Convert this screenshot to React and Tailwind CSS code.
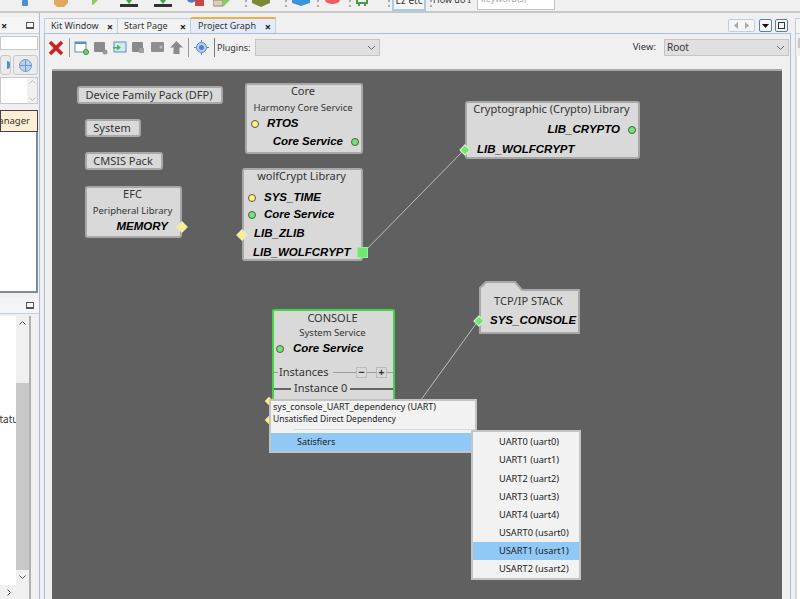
import React from "react";

const Close = () => <span className="text-[11px] font-bold leading-none text-[#222]">×</span>;

function Port({ kind, color }) {
    const fill = color === "green" ? "bg-[#6fe86f]" : "bg-[#fdf27a]";
    if (kind === "diamond") {
        return <span className={`block w-[8px] h-[8px] rotate-45 ${fill} border border-[#e8e8e8]`} />;
    }
    return <span className={`block w-[8px] h-[8px] rounded-full ${fill} border border-[#555]`} />;
}

function Label({ children, className = "" }) {
    return <span className={`font-['Liberation_Sans',sans-serif] font-bold italic text-[11.5px] leading-none text-black whitespace-nowrap ${className}`}>{children}</span>;
}

function Pill({ className, children }) {
    return (
        <div className={`absolute h-[18px] pr-[2px] flex items-center justify-center bg-[#d9d9d9] border-2 border-[#a8a8a8] rounded-[3px] text-[11px] text-[#333] whitespace-nowrap ${className}`}>
            {children}
        </div>
    );
}

function Box({ className, title, subtitle, children }) {
    return (
        <div className={`absolute bg-[#d9d9d9] border-2 border-[#a8a8a8] rounded-[3px] flex flex-col ${className}`}>
            <div className="pr-[2px] text-center text-[11px] leading-[12px] text-[#333] whitespace-nowrap">{title}</div>
            {subtitle && <div className="pr-[2px] text-center text-[9.5px] leading-[12px] mt-[5px] text-[#333] whitespace-nowrap">{subtitle}</div>}
            {children}
        </div>
    );
}

function GraphCanvas() {
    return (
        <div className="relative flex-1 bg-[#606060] border-t-2 border-[#a9a9a9] overflow-hidden">
            <svg className="absolute left-0 top-0" width="730" height="529" fill="none" stroke="#bdbdbd" strokeWidth="1">
                <path d="M311 182 L413 78" />
                <path d="M426 250 L366 333" />
            </svg>

            <Pill className="left-[25px] top-[15px] w-[146px]">Device Family Pack (DFP)</Pill>
            <Pill className="left-[33px] top-[48px] w-[56px]">System</Pill>
            <Pill className="left-[33px] top-[81px] w-[78px]">CMSIS Pack</Pill>

            <Box className="left-[33px] top-[115px] w-[97px] h-[52px]" title="EFC" subtitle="Peripheral Library">
                <div className="relative flex justify-end pr-[12px] mt-[4px]">
                    <Label>MEMORY</Label>
                    <span className="absolute right-[-6px] top-[2px]"><Port kind="diamond" /></span>
                </div>
            </Box>

            <Box className="left-[193px] top-[12px] w-[118px] h-[71px]" title="Core" subtitle="Harmony Core Service">
                <div className="flex items-center gap-[8px] pl-[4px] mt-[3px] h-[14px]">
                    <Port />
                    <Label>RTOS</Label>
                </div>
                <div className="flex items-center justify-end gap-[8px] pr-[2px] mt-[4px] h-[14px]">
                    <Label>Core Service</Label>
                    <Port color="green" />
                </div>
            </Box>

            <Box className="left-[190px] top-[97px] w-[121px] h-[93px]" title="wolfCrypt Library">
                <div className="flex items-center gap-[8px] pl-[4px] mt-[9px] h-[14px]">
                    <Port />
                    <Label>SYS_TIME</Label>
                </div>
                <div className="flex items-center gap-[8px] pl-[4px] mt-[4px] h-[14px]">
                    <Port color="green" />
                    <Label>Core Service</Label>
                </div>
                <div className="relative pl-[10px] mt-[6px] h-[14px] flex items-center">
                    <span className="absolute left-[-6px] top-[3px]"><Port kind="diamond" color="yellow" /></span>
                    <Label>LIB_ZLIB</Label>
                </div>
                <div className="relative pl-[9px] mt-[5px] h-[14px] flex items-center">
                    <Label>LIB_WOLFCRYPT</Label>
                    <span className="absolute right-[-7px] top-[1px] w-[11px] h-[11px] bg-[#6fe86f] border border-[#9ce89c]" />
                </div>
            </Box>

            <Box className="left-[413px] top-[30px] w-[175px] h-[58px]" title="Cryptographic (Crypto) Library">
                <div className="flex items-center justify-end gap-[8px] pr-[2px] mt-[8px] h-[14px]">
                    <Label>LIB_CRYPTO</Label>
                    <Port color="green" />
                </div>
                <div className="relative pl-[10px] mt-[6px] h-[14px] flex items-center">
                    <span className="absolute left-[-6px] top-[3px]"><Port kind="diamond" color="green" /></span>
                    <Label>LIB_WOLFCRYPT</Label>
                </div>
            </Box>

            {/* folder tab on top of the stack node */}
            <svg className="absolute left-[427px] top-[210px]" width="101" height="11" fill="#d9d9d9" stroke="#a8a8a8" strokeWidth="2">
                <path d="M1 11 V7 L7 1 H36 L43 9 H100 V11" />
            </svg>
            <div className="absolute left-[427px] top-[220px] w-[101px] h-[43px] bg-[#d9d9d9] border-2 border-t-0 border-[#a8a8a8] flex flex-col">
                <div className="pr-[2px] text-center text-[11px] leading-[14px] text-[#333] whitespace-nowrap mt-[3px]">TCP/IP STACK</div>
                <div className="relative pl-[9px] mt-[6px] h-[14px] flex items-center">
                    <span className="absolute left-[-6px] top-[3px]"><Port kind="diamond" color="green" /></span>
                    <Label>SYS_CONSOLE</Label>
                </div>
            </div>

            <div className="absolute left-[220px] top-[238px] w-[123px] h-[110px] bg-[#d9d9d9] border-2 border-[#3fd53f] rounded-[2px] flex flex-col">
                <div className="pr-[2px] text-center text-[11px] leading-[13px] text-[#333]">CONSOLE</div>
                <div className="pr-[2px] text-center text-[9.5px] leading-[12px] mt-[3px] text-[#333]">System Service</div>
                <div className="flex items-center gap-[9px] pl-[2px] mt-[4px] h-[14px]">
                    <Port color="green" />
                    <Label>Core Service</Label>
                </div>
                <div className="flex items-center mt-[11px] h-[14px]">
                    <span className="w-[4px] h-px bg-[#999]" />
                    <span className="text-[11px] text-[#333] ml-[1px]">Instances</span>
                    <span className="flex-1 h-px bg-[#999] ml-[4px]" />
                    <span className="w-[11px] h-[11px] border border-[#bbb] text-[11px] leading-[8px] font-bold text-center text-[#333]">−</span>
                    <span className="w-[9px] h-px bg-[#999]" />
                    <span className="w-[11px] h-[11px] border border-[#bbb] text-[11px] leading-[8px] font-bold text-center text-[#333]">+</span>
                    <span className="w-[6px] h-px bg-[#999]" />
                </div>
                <div className="flex items-center mt-[2px] h-[14px]">
                    <span className="w-[17px] h-[2px] bg-[#666]" />
                    <span className="text-[11px] text-[#333] mx-[3px] whitespace-nowrap">Instance 0</span>
                    <span className="flex-1 h-[2px] bg-[#666]" />
                </div>
                <div className="pl-[12px] -mt-[2px]"><Label>UART</Label></div>
            </div>
            <span className="absolute left-[214px] top-[327px] w-[6px] h-[6px] rotate-45 bg-[#fdf27a]" />
            <span className="absolute left-[214px] top-[346px] w-[6px] h-[6px] rotate-45 bg-[#fdf27a]" />

            {/* context menu */}
            <div className="absolute left-[217px] top-[328px] w-[208px] h-[54px] bg-[#f2f2f2] border-2 border-[#c4c4c4] text-[9px] text-[#222]">
                <div className="pl-[2px] leading-[12px] whitespace-nowrap">sys_console_UART_dependency (UART)</div>
                <div className="pl-[2px] leading-[12px] text-[8.5px] whitespace-nowrap">Unsatisfied Direct Dependency</div>
                <div className="ml-[22px] mt-[4px] h-[1px] bg-[#dcdcdc]" />
                <div className="mt-[3px] h-[18px] bg-[#90c8f6] flex items-center justify-between pl-[26px] pr-[1px]">
                    <span>Satisfiers</span>
                    <span className="text-[#444]">›</span>
                </div>
            </div>

            <div className="absolute left-[419px] top-[359px] w-[110px] h-[150px] bg-[#f2f2f2] border-2 border-[#c4c4c4] pt-[1px] text-[9.25px] text-[#222]">
                {["UART0 (uart0)", "UART1 (uart1)", "UART2 (uart2)", "UART3 (uart3)", "UART4 (uart4)", "USART0 (usart0)", "USART1 (usart1)", "USART2 (usart2)"].map((item) => (
                    <div key={item} className={`h-[18.2px] flex items-center pl-[26px] whitespace-nowrap ${item.startsWith("USART1") ? "bg-[#90c8f6]" : ""}`}>
                        {item}
                    </div>
                ))}
            </div>
        </div>
    );
}

function GraphToolbar() {
    return (
        <div className="h-[35px] pt-[5px] pb-[13px] flex items-center shrink-0 text-[9px] text-[#333]">
            <svg className="ml-[3px]" width="16" height="16" viewBox="0 0 16 16"><path d="M2 2 L14 14 M14 2 L2 14" stroke="#cc1f1f" strokeWidth="3.5" /></svg>
            <span className="ml-[5px] w-px h-[19px] bg-[#9a9a9a]" />
            <svg className="ml-[4px]" width="15" height="15" viewBox="0 0 15 15"><rect x="1" y="2" width="11" height="10" fill="#fff" stroke="#5b8fc7" /><rect x="1" y="2" width="11" height="2" fill="#5b8fc7" /><circle cx="12" cy="12" r="2.5" fill="#6fcf6f" stroke="#3a8f3a" /></svg>
            <svg className="ml-[4px]" width="15" height="15" viewBox="0 0 15 15"><rect x="1" y="2" width="11" height="10" fill="#8a8a8a" rx="1" /><circle cx="12" cy="12" r="2.5" fill="#999" /></svg>
            <svg className="ml-[4px]" width="15" height="15" viewBox="0 0 15 15"><rect x="2" y="2" width="12" height="10" fill="#d7e6f5" stroke="#5b8fc7" /><path d="M1 7 H5 V4.5 L9 7.5 L5 10.5 V8.5 H1 Z" fill="#3ec13e" /></svg>
            <svg className="ml-[4px]" width="15" height="15" viewBox="0 0 15 15"><rect x="1" y="2" width="11" height="10" fill="#8a8a8a" rx="1" /><rect x="8" y="8" width="5" height="5" fill="#a0a0a0" /></svg>
            <svg className="ml-[4px]" width="15" height="15" viewBox="0 0 15 15"><rect x="1" y="2" width="13" height="10" fill="#8f8f8f" rx="1" /><circle cx="11" cy="7" r="1.5" fill="#bbb" /></svg>
            <svg className="ml-[4px]" width="15" height="15" viewBox="0 0 15 15"><path d="M7.5 1 L14 7.5 H10.5 V14 H4.5 V7.5 H1 Z" fill="#8a8a8a" /></svg>
            <span className="ml-[4px] w-px h-[19px] bg-[#9a9a9a]" />
            <svg className="ml-[5px]" width="15" height="15" viewBox="0 0 15 15"><circle cx="7.5" cy="7.5" r="5" fill="#b9d2f2" stroke="#4d82d6" /><circle cx="7.5" cy="7.5" r="2.5" fill="#4d82d6" /><path d="M0 7.5 H2 M13 7.5 H15 M7.5 0 V2 M7.5 13 V15" stroke="#4d82d6" /></svg>
            <span className="ml-[5px] w-px h-[19px] bg-[#777]" />
            <span className="ml-[2px] w-[34px]">Plugins:</span>
            <div className="ml-[4px] w-[125px] h-[17px] bg-[#e0e0e0] border border-[#c4c4c4] flex items-center justify-end pr-[3px]">
                <Chevron />
            </div>
            <span className="ml-auto mr-[8px] text-[9.5px]">View:</span>
            <div className="mr-[1px] w-[125px] h-[17px] bg-[#e0e0e0] border border-[#c4c4c4] flex items-center justify-between pl-[2px] pr-[3px] text-[10px]">
                <span>Root</span>
                <Chevron />
            </div>
        </div>
    );
}

function Chevron() {
    return <svg width="9" height="6" viewBox="0 0 9 6" fill="none" stroke="#666"><path d="M1 1 L4.5 4.5 L8 1" /></svg>;
}

function TopIcon({ className, children, width = 18 }) {
    return <svg className={className} width={width} height="11" viewBox={`0 0 ${width} 11`}>{children}</svg>;
}

const Dots = ({ className }) => <span className={`w-[2px] h-[7px] border-l-2 border-dotted border-[#aaa] ${className}`} />;

function TopBar() {
    return (
        <div className="h-[13px] shrink-0 border-b-2 border-[#c8c8c8] flex items-start overflow-hidden">
            <TopIcon className="ml-[22px]" width={7}><rect width="6" height="6" rx="1" fill="#4a90d0" /></TopIcon>
            <TopIcon className="ml-[25px]" width={15}><path d="M0 0 H14 V3 L10 7 H3 L0 4 Z" fill="#e0a860" /></TopIcon>
            <TopIcon className="ml-[22px]" width={8}><path d="M1 0 H7 L2 5 H1 Z" fill="#8ccc5c" /></TopIcon>
            <TopIcon className="ml-[21px]"><path d="M6 0 H12 L9 4 Z" fill="#3aa83a" /><rect y="4" width="18" height="3" fill="#333" /></TopIcon>
            <TopIcon className="ml-[16px]"><path d="M6 0 H12 L9 4 Z" fill="#3aa83a" /><rect y="4" width="18" height="3" fill="#333" /></TopIcon>
            <TopIcon className="ml-[15px]"><path d="M0 0 H9 A5 5 0 0 1 0 0 Z" fill="#4a7fc0" /><rect x="8" width="9" height="6" fill="#c84848" /></TopIcon>
            <TopIcon className="ml-[8px]"><rect x="0" width="10" height="6" fill="#d8d0b0" stroke="#888" /><path d="M10 0 H17 L11 6 H10 Z" fill="#8ccc5c" /></TopIcon>
            <Dots className="ml-[14px]" />
            <TopIcon className="ml-[5px]"><path d="M0 0 H18 V3 L9 7 L0 3 Z" fill="#7a8a3a" /></TopIcon>
            <Dots className="ml-[15px]" />
            <TopIcon className="ml-[5px]"><path d="M0 0 H18 V3 L9 6 L0 3 Z" fill="#3a96d8" /></TopIcon>
            <Dots className="ml-[7px]" />
            <TopIcon className="ml-[6px]" width={15}><path d="M0 0 H15 A7.5 4 0 0 1 0 0 Z" fill="#e86060" /></TopIcon>
            <Dots className="ml-[9px]" />
            <TopIcon className="ml-[5px]" width={13}><path d="M1 0 V3 H11 V0 M3 3 V6 M9 3 V6" fill="none" stroke="#4a9a4a" strokeWidth="2" /></TopIcon>
            <Dots className="ml-[19px]" />
            <div className="ml-[2px] w-[34px] h-[11px] border-2 border-t-0 border-[#a8cbe8] bg-[#f5f5f5] flex justify-center overflow-hidden">
                <span className="text-[10px] leading-[10px] -mt-[5px] text-[#333]">Ez etc</span>
            </div>
            <Dots className="ml-[4px]" />
            <div className="ml-[1px] w-[38px] h-[11px] overflow-hidden">
                <div className="text-[9px] leading-[10px] -mt-[5px] text-[#333] whitespace-nowrap">How do I:</div>
            </div>
            <div className="ml-[6px] w-[78px] h-[10px] bg-white border border-t-0 border-[#c4c4c4] pl-[3px] overflow-hidden">
                <div className="text-[9px] leading-[10px] -mt-[6px] text-[#aaa]">keyword(s)</div>
            </div>
        </div>
    );
}

function LeftColumn() {
    return (
        <div className="w-[40px] shrink-0 flex flex-col overflow-hidden border-r border-[#a8bfd6]">
            <div className="h-[17px] mt-[4px] flex items-center justify-between bg-[#f5f5f5] border-b border-[#bcd0e2] pr-[5px] pl-[1px]">
                <Close />
                <span className="w-[8px] h-[7px] border border-[#555] border-b-2" />
            </div>
            <div className="mt-[2px] h-[14px] bg-white border border-[#c8c8c8] mr-[1px]" />
            <div className="mt-[5px] h-[20px] flex gap-[2px] mr-[1px]">
                <div className="flex-1 border border-[#c8c8c8] rounded-[3px] bg-[#ebebeb] overflow-hidden flex items-center justify-end"><span className="w-[3px] h-[8px] bg-[#4a8fd0] rounded-r-full" /></div>
                <div className="w-[25px] border border-[#c8c8c8] rounded-[3px] bg-[#ebebeb] flex items-center justify-center">
                    <svg width="13" height="13" viewBox="0 0 13 13" fill="#b9d2f2" stroke="#6f97c9"><circle cx="6.5" cy="6.5" r="6" /><path d="M0.5 6.5 H12.5 M6.5 0.5 V12.5" fill="none" /></svg>
                </div>
            </div>
            <div className="mt-[2px] h-[27px] bg-white border border-[#c8c8c8] flex justify-end mr-[1px]">
                <div className="w-[10px] bg-[#f0f0f0] flex flex-col justify-between items-center py-[2px]">
                    <svg width="7" height="4" viewBox="0 0 7 4" fill="none" stroke="#bbb"><path d="M0.5 3.5 L3.5 0.5 L6.5 3.5" /></svg>
                    <svg width="7" height="4" viewBox="0 0 7 4" fill="none" stroke="#bbb"><path d="M0.5 0.5 L3.5 3.5 L6.5 0.5" /></svg>
                </div>
            </div>
            <div className="mt-[6px] h-[22px] bg-[#ffeed6] border border-[#444] flex items-center justify-end pr-[7px] mr-[1px] text-[9.5px] text-[#333] overflow-hidden whitespace-nowrap">
                Manager
            </div>
            <div className="h-[161px] bg-white border-r-2 border-b-2 border-[#7d8c9b] mr-[1px]" />
            <div className="mt-[5px] h-[16px] flex items-center justify-end bg-[#f5f5f5] border-b border-[#bcd0e2] pr-[5px]">
                <span className="w-[8px] h-[7px] border border-[#555] border-b-2" />
            </div>
            <div className="mt-[2px] flex-1 w-[31px] flex flex-col bg-white border-r-2 border-[#b0b0b0] min-h-0">
                <div className="flex-1 flex min-h-0">
                    <div className="flex-1 overflow-hidden pt-[96px] text-[10px] text-[#333] whitespace-nowrap">
                        <span className="block -ml-[6px]">Status</span>
                    </div>
                    <div className="w-[13px] bg-[#f0f0f0] flex flex-col">
                        <svg className="mt-[5px] ml-[3px]" width="7" height="4" viewBox="0 0 7 4" fill="none" stroke="#555"><path d="M0.5 3.5 L3.5 0.5 L6.5 3.5" /></svg>
                        <div className="mt-[58px] h-[187px] bg-[#c8c8c8]" />
                        <svg className="mt-[5px] ml-[3px]" width="7" height="4" viewBox="0 0 7 4" fill="none" stroke="#555"><path d="M0.5 0.5 L3.5 3.5 L6.5 0.5" /></svg>
                    </div>
                </div>
                <div className="h-[14px] bg-[#f0f0f0] flex items-center pl-[7px]">
                    <svg width="4" height="7" viewBox="0 0 4 7" fill="none" stroke="#555"><path d="M0.5 0.5 L3.5 3.5 L0.5 6.5" /></svg>
                </div>
            </div>
        </div>
    );
}

function MainPanel() {
    return (
        <div className="ml-[4px] w-[747px] shrink-0 flex flex-col pt-[5px]">
            <div className="h-[15px] flex items-end shrink-0 text-[9px] text-[#333]">
                <div className="w-[74px] h-[15px] bg-[#f2f2f2] border-t border-x border-[#bcd0e2] flex items-center justify-between pl-[6px] pr-[4px]">Kit Window<Close /></div>
                <div className="w-[73px] h-[15px] bg-[#f2f2f2] border-t border-r border-[#bcd0e2] flex items-center justify-between pl-[6px] pr-[4px]">Start Page<Close /></div>
                <div className="w-[85px] h-[16px] bg-[#e3ecf8] border-t-2 border-r border-t-[#f0ad4e] border-r-[#bcd0e2] flex items-center justify-between pl-[7px] pr-[4px]">Project Graph<Close /></div>
                <div className="ml-auto mb-[1px] mr-[3px] flex items-center gap-[1px]">
                    <div className="flex w-[27px] h-[13px] border border-[#bcd0e2] rounded-[2px] bg-[#f5f5f5] items-center justify-around px-[2px]">
                        <svg width="4" height="7" viewBox="0 0 4 7" fill="#aaa"><path d="M4 0 V7 L0 3.5 Z" /></svg>
                        <svg width="4" height="7" viewBox="0 0 4 7" fill="#aaa"><path d="M0 0 V7 L4 3.5 Z" /></svg>
                    </div>
                    <div className="ml-[3px] w-[13px] h-[13px] border border-[#5a7fa8] rounded-[2px] bg-[#f5f5f5] flex items-center justify-center">
                        <svg width="7" height="4" viewBox="0 0 7 4" fill="#111"><path d="M0 0 H7 L3.5 4 Z" /></svg>
                    </div>
                    <div className="ml-[2px] w-[13px] h-[13px] border border-[#5a7fa8] rounded-[2px] bg-[#f5f5f5] flex items-center justify-center">
                        <span className="w-[7px] h-[7px] border border-[#333]" />
                    </div>
                </div>
            </div>
            <div className="flex-1 flex flex-col border-t border-x border-[#a8bfd6] min-h-0">
                <GraphToolbar />
                <div className="ml-[7px] w-[730px] flex-1 flex flex-col min-h-0">
                    <GraphCanvas />
                </div>
            </div>
        </div>
    );
}

function RightColumn() {
    return (
        <div className="ml-[4px] flex-1 flex flex-col pt-[5px] overflow-hidden">
            <div className="h-[15px] border-t border-l border-[#bcd0e2] bg-[#f5f5f5]" />
            <div className="h-[23px] border-l border-t border-[#bcd0e2] pl-[2px] pt-[4px]">
                <div className="h-[10px] border border-[#c8c8c8]" />
            </div>
            <div className="flex-1 bg-white border-l-2 border-[#d8d8d8]" />
        </div>
    );
}

export default function App() {
    return (
        <div className="w-[800px] h-[599px] overflow-hidden flex flex-col bg-[#f0f0f0] font-['Noto_Sans',sans-serif]">
            <TopBar />
            <div className="flex-1 flex min-h-0">
                <LeftColumn />
                <MainPanel />
                <RightColumn />
            </div>
        </div>
    );
}
